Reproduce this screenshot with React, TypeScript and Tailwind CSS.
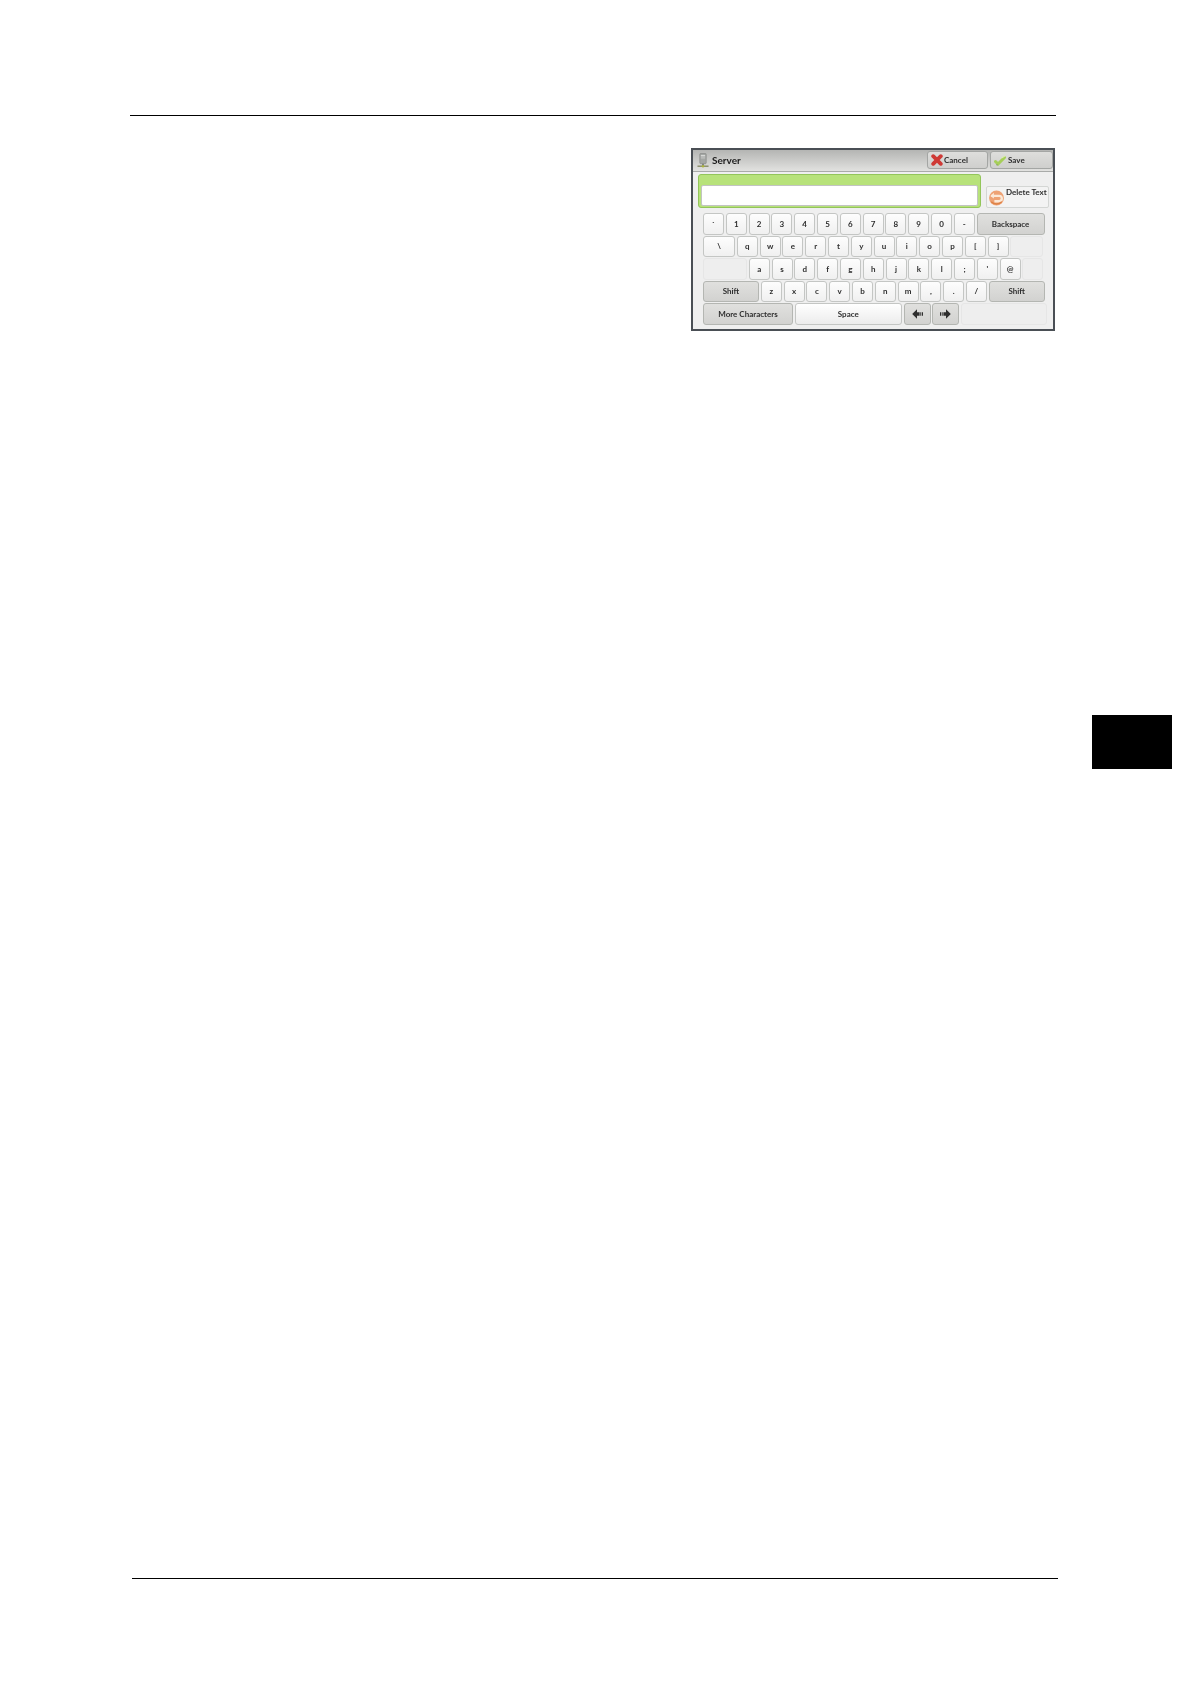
const font = "[font-family:Lato,'Noto_Sans',sans-serif]";

type KeyKind = "char" | "func" | "blank" | "space";

function Key({ label, kind = "char", w = 21, children }: { label?: string; kind?: KeyKind; w?: number; children?: React.ReactNode }) {
  const look =
    kind === "func"
      ? "bg-gradient-to-b from-[#e0e0de] to-[#d2d2d0] border-[#b4b6b2]"
      : kind === "blank"
        ? "bg-[#eeeeee] border-[#e6e6e6]"
        : kind === "space"
          ? "bg-gradient-to-b from-[#ffffff] to-[#ececec] border-[#c4c6c4]"
          : "bg-gradient-to-b from-[#fdfdfd] to-[#f0f0f0] border-[#c4c6c4]";
  return (
    <div
      style={{ width: w }}
      className={`flex h-[21.5px] shrink-0 items-center justify-center rounded-[3px] border text-[8px] font-bold text-[#2e2e2e] ${look}`}
    >
      {children ?? label}
    </div>
  );
}

function ServerIcon() {
  return (
    <svg width="12" height="15" viewBox="0 0 13 16" className="shrink-0">
      <rect x="3" y="0.5" width="7" height="11" rx="1" fill="#a4a7a4" stroke="#7d807d" strokeWidth="0.6" />
      <rect x="4.2" y="2" width="4.6" height="1.6" fill="#d6d8d6" />
      <rect x="4.2" y="4.6" width="4.6" height="1.2" fill="#c4c6c4" />
      <rect x="5.5" y="11.5" width="2" height="2" fill="#7d807d" />
      <rect x="0.5" y="13.4" width="12" height="1.6" fill="#8b8e6c" />
      <circle cx="6.5" cy="14.2" r="1.3" fill="#a9b23c" />
    </svg>
  );
}

function CancelIcon() {
  return (
    <svg width="12" height="12" viewBox="0 0 12 12" className="shrink-0">
      <path d="M2.2 2.2 L9.8 9.8 M9.8 2.2 L2.2 9.8" stroke="#cf3a36" strokeWidth="3.8" strokeLinecap="round" />
    </svg>
  );
}

function SaveIcon() {
  return (
    <svg width="12" height="11" viewBox="0 0 12 11" className="shrink-0">
      <path d="M1.5 6.5 L4 9 L10.5 2.5" fill="none" stroke="#a6cf58" strokeWidth="3" strokeLinecap="round" />
      <path d="M7.5 3 L10.8 1" stroke="#dcebb4" strokeWidth="1.3" />
      <path d="M2 9.8 L4 9.8" stroke="#8a9a6a" strokeWidth="0.8" />
    </svg>
  );
}

function DeleteIcon() {
  return (
    <svg width="17" height="17" viewBox="0 0 16 16" className="shrink-0">
      <circle cx="8" cy="8.5" r="7" fill="#eea274" />
      <path d="M3 6.5 H10.5 A2.5 2.5 0 0 1 10.5 11.5 H6" fill="none" stroke="#fbe9d8" strokeWidth="2.2" />
      <path d="M5.5 3.6 L2.2 6.5 L5.5 9 Z" fill="#fbe9d8" />
      <path d="M3 12 A7 7 0 0 0 13 12" fill="none" stroke="#dd8347" strokeWidth="1.4" />
    </svg>
  );
}

function ArrowIcon({ flip }: { flip?: boolean }) {
  return (
    <svg width="11" height="10" viewBox="0 0 11 10" style={{ transform: flip ? "scaleX(-1)" : undefined }}>
      <path d="M0 3.2 H1 V6.8 H0 Z M1.7 3.2 H2.7 V6.8 H1.7 Z M3.4 3.2 H6 V0.3 L10.8 5 L6 9.7 V6.8 H3.4 Z" fill="#2e2e2e" />
    </svg>
  );
}

const row1 = ["`", "1", "2", "3", "4", "5", "6", "7", "8", "9", "0", "-"];
const row2 = ["q", "w", "e", "r", "t", "y", "u", "i", "o", "p", "[", "]"];
const row3 = ["a", "s", "d", "f", "g", "h", "j", "k", "l", ";", "'", "@"];
const row4 = ["z", "x", "c", "v", "b", "n", "m", ",", ".", "/"];

function KeyRow({ children }: { children: React.ReactNode }) {
  return <div className="flex gap-[1.8px]">{children}</div>;
}

function ServerPanel() {
  return (
    <div className={`ml-[691px] mt-[32px] h-[183px] w-[364px] border-2 border-[#4a4f55] bg-[#efefef] blur-[0.3px] ${font}`}>
      <div className="flex h-[22px] items-center justify-between border-b border-[#a9aba9] bg-gradient-to-b from-[#b4b5b3] to-[#e2e2e0] pl-[4px]">
        <div className="flex items-center gap-[3px] text-[10px] font-bold text-[#1c1c1c]">
          <ServerIcon />
          Server
        </div>
        <div className="mb-[1px] flex gap-[2px]">
          <div className="flex h-[18px] w-[61px] items-center gap-[1px] rounded-[3px] border border-[#a4a6a4] bg-gradient-to-b from-[#dededc] to-[#cfcfcd] pl-[3px] text-[8px] font-bold text-[#2e2e2e]">
            <CancelIcon />
            Cancel
          </div>
          <div className="flex h-[18px] w-[63px] items-center gap-[2px] rounded-[3px] border border-[#a4a6a4] bg-gradient-to-b from-[#dededc] to-[#cfcfcd] pl-[3px] text-[8px] font-bold text-[#2e2e2e]">
            <SaveIcon />
            Save
          </div>
        </div>
      </div>
      <div className="flex items-start gap-[5px] pl-[5px] pt-[2px]">
        <div className="h-[34px] w-[283px] rounded-[3px] border border-[#93c55a] bg-[#b7e27a] px-[2px] pb-[1px] pt-[10px]">
          <div className="h-[21px] rounded-[2px] border border-[#c2c4c2] bg-white" />
        </div>
        <div className="mt-[12px] flex h-[22px] w-[63px] items-center rounded-[2px] border border-[#d4d6d4] bg-[#f3f3f3] pl-[1px] text-[8px] font-bold text-[#2e2e2e]">
          <DeleteIcon />
          <span className="mb-[10px] ml-[1px] whitespace-nowrap">Delete Text</span>
        </div>
      </div>
      <div className="flex flex-col gap-[1px] pl-[10px] pt-[5px]">
        <KeyRow>
          {row1.map((k) => (
            <Key key={k} label={k} />
          ))}
          <Key label="Backspace" kind="func" w={68} />
        </KeyRow>
        <KeyRow>
          <Key label="\" w={32} />
          {row2.map((k) => (
            <Key key={k} label={k} />
          ))}
          <Key kind="blank" w={33} />
        </KeyRow>
        <KeyRow>
          <Key kind="blank" w={44} />
          {row3.map((k) => (
            <Key key={k} label={k} />
          ))}
          <Key kind="blank" w={21} />
        </KeyRow>
        <KeyRow>
          <Key label="Shift" kind="func" w={56} />
          {row4.map((k) => (
            <Key key={k} label={k} />
          ))}
          <Key label="Shift" kind="func" w={56} />
        </KeyRow>
        <KeyRow>
          <Key label="More Characters" kind="func" w={90} />
          <Key label="Space" kind="space" w={107} />
          <Key kind="func" w={27}>
            <ArrowIcon flip />
          </Key>
          <Key kind="func" w={27}>
            <ArrowIcon />
          </Key>
          <Key kind="blank" w={86} />
        </KeyRow>
      </div>
    </div>
  );
}

export default function App() {
  return (
    <div className="flex h-[1684px] w-[1190px] flex-col overflow-hidden bg-white">
      <div className="ml-[130px] mt-[115px] h-[1px] w-[926px] bg-black" />
      <ServerPanel />
      <div className="ml-[1092px] mt-[384px] h-[54px] w-[80px] bg-black" />
      <div className="ml-[132px] mt-[809px] h-[1px] w-[926px] bg-black" />
    </div>
  );
}
